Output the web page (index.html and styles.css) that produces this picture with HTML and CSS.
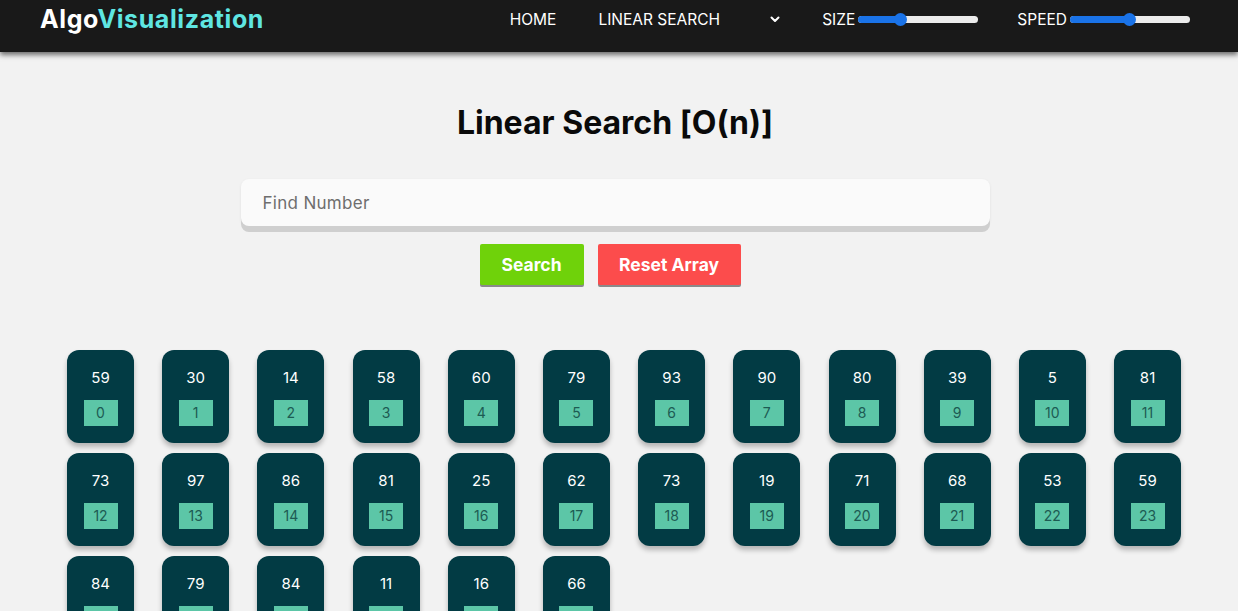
FILE: index.html
```html
<!DOCTYPE html>
<html>
<head>
<meta charset="utf-8">
<link rel="stylesheet" href="styles.css">
</head>
<body>
<nav class="navbar">
  <div class="logo"><span class="logo-a">Algo</span><span class="logo-b">Visualization</span></div>
  <div class="nav-items">
    <span class="nav-link home">HOME</span>
    <span class="nav-link algo">LINEAR SEARCH</span>
    <svg class="chev" width="10" height="7" viewBox="0 0 10 7"><path d="M1.5 1.5 L5 5 L8.5 1.5" fill="none" stroke="#fff" stroke-width="2" stroke-linecap="round" stroke-linejoin="round"/></svg>
    <span class="nav-link size">SIZE</span>
    <div class="slider s1"><div class="fill"></div><div class="thumb"></div></div>
    <span class="nav-link speed">SPEED</span>
    <div class="slider s2"><div class="fill"></div><div class="thumb"></div></div>
  </div>
</nav>
<main class="main">
  <h1 class="title">Linear Search [O(n)]</h1>
  <div class="search-box"><input class="search-input" type="text" placeholder="Find Number"></div>
  <div class="buttons">
    <button class="btn btn-green">Search</button>
    <button class="btn btn-red">Reset Array</button>
  </div>
  <div class="grid">
    <div class="card"><div class="val">59</div><div class="idx">0</div></div>
    <div class="card"><div class="val">30</div><div class="idx">1</div></div>
    <div class="card"><div class="val">14</div><div class="idx">2</div></div>
    <div class="card"><div class="val">58</div><div class="idx">3</div></div>
    <div class="card"><div class="val">60</div><div class="idx">4</div></div>
    <div class="card"><div class="val">79</div><div class="idx">5</div></div>
    <div class="card"><div class="val">93</div><div class="idx">6</div></div>
    <div class="card"><div class="val">90</div><div class="idx">7</div></div>
    <div class="card"><div class="val">80</div><div class="idx">8</div></div>
    <div class="card"><div class="val">39</div><div class="idx">9</div></div>
    <div class="card"><div class="val">5</div><div class="idx">10</div></div>
    <div class="card"><div class="val">81</div><div class="idx">11</div></div>
    <div class="card"><div class="val">73</div><div class="idx">12</div></div>
    <div class="card"><div class="val">97</div><div class="idx">13</div></div>
    <div class="card"><div class="val">86</div><div class="idx">14</div></div>
    <div class="card"><div class="val">81</div><div class="idx">15</div></div>
    <div class="card"><div class="val">25</div><div class="idx">16</div></div>
    <div class="card"><div class="val">62</div><div class="idx">17</div></div>
    <div class="card"><div class="val">73</div><div class="idx">18</div></div>
    <div class="card"><div class="val">19</div><div class="idx">19</div></div>
    <div class="card"><div class="val">71</div><div class="idx">20</div></div>
    <div class="card"><div class="val">68</div><div class="idx">21</div></div>
    <div class="card"><div class="val">53</div><div class="idx">22</div></div>
    <div class="card"><div class="val">59</div><div class="idx">23</div></div>
    <div class="card"><div class="val">84</div><div class="idx">24</div></div>
    <div class="card"><div class="val">79</div><div class="idx">25</div></div>
    <div class="card"><div class="val">84</div><div class="idx">26</div></div>
    <div class="card"><div class="val">11</div><div class="idx">27</div></div>
    <div class="card"><div class="val">16</div><div class="idx">28</div></div>
    <div class="card"><div class="val">66</div><div class="idx">29</div></div>
  </div>
</main>
</body>
</html>
```
FILE: styles.css
```css
* { box-sizing: border-box; }
html, body { margin: 0; padding: 0; }
body {
  background: #f2f2f2;
  font-family: "Inter", "Open Sans", sans-serif;
  width: 1238px;
  height: 611px;
  overflow: hidden;
}
.navbar {
  height: 52px;
  background: #191919;
  display: flex;
  align-items: center;
  padding-left: 40px;
  box-shadow: 0 3px 5px rgba(0,0,0,0.55);
  position: relative;
  z-index: 2;
}
.logo {
  font-size: 25px;
  font-weight: 700;
  letter-spacing: 0.6px;
  margin-top: -14px;
}
.logo-a { color: #ffffff; }
.logo-b { color: #5fe6e2; }
.nav-items {
  display: flex;
  align-items: center;
  margin-left: auto;
  margin-right: 48px;
  margin-top: -14px;
  color: #fff;
  font-size: 15.5px;
}
.nav-link { letter-spacing: 0; }
.home { margin-right: 42px; }
.algo { margin-right: 50px; }
.chev { margin-right: 42px; margin-top: 1px; }
.size { margin-right: 3px; }
.speed { margin-left: 39px; margin-right: 3px; }
.slider {
  position: relative;
  width: 120px;
  height: 7px;
  border-radius: 4px;
  background: #ececec;
}
.slider .fill {
  height: 100%;
  border-radius: 4px;
  background: #1a73e8;
}
.s1 .fill { width: 43px; }
.s2 .fill { width: 60px; }
.slider .thumb {
  position: absolute;
  top: -3px;
  width: 13px;
  height: 13px;
  border-radius: 50%;
  background: #1a73e8;
}
.s1 .thumb { left: 36px; }
.s2 .thumb { left: 53px; }
.main {
  display: flex;
  flex-direction: column;
  align-items: center;
  padding-right: 8px;
}
.title {
  margin: 51px 0 0;
  font-size: 32px;
  font-weight: 700;
  color: #0a0a0a;
  letter-spacing: 0;
  line-height: 40px;
}
.search-box {
  margin-top: 36px;
  width: 749px;
}
.search-input {
  width: 100%;
  height: 47px;
  border: none;
  outline: none;
  border-radius: 8px;
  background: #fafafa;
  box-shadow: 0 6px 0 #cfcfcf, 0 1px 3px rgba(0,0,0,0.08);
  padding: 0 22px;
  font-family: inherit;
  font-size: 17px;
  letter-spacing: 0.3px;
  color: #333;
}
.search-input::placeholder { color: #6e6e6e; }
.buttons {
  margin-top: 18px;
  margin-right: 10px;
  display: flex;
  gap: 14px;
}
.btn {
  border: none;
  height: 41px;
  border-radius: 2px;
  color: #fff;
  font-family: inherit;
  font-size: 17.5px;
  font-weight: 700;
  box-shadow: 0 2px 0 #8a8a8a;
  padding: 0;
}
.btn-green { background: #6fd20a; width: 104px; }
.btn-red { background: #fc4c4c; width: 143px; }
.grid {
  align-self: flex-start;
  margin-left: 67px;
  margin-top: 65px;
  display: grid;
  grid-template-columns: repeat(12, 67px);
  column-gap: 28.2px;
  row-gap: 10px;
}
.card {
  width: 67px;
  height: 93px;
  background: #023b44;
  border-radius: 12px;
  box-shadow: 0 4px 5px rgba(0,0,0,0.25);
  display: flex;
  flex-direction: column;
  align-items: center;
  padding-top: 18px;
}
.val {
  color: #fff;
  font-size: 15px;
  line-height: 20px;
  height: 20px;
}
.idx {
  margin-top: 12px;
  width: 34px;
  height: 26px;
  background: #5cc6a7;
  color: #1d5b53;
  font-size: 14px;
  line-height: 26px;
  text-align: center;
}
```
